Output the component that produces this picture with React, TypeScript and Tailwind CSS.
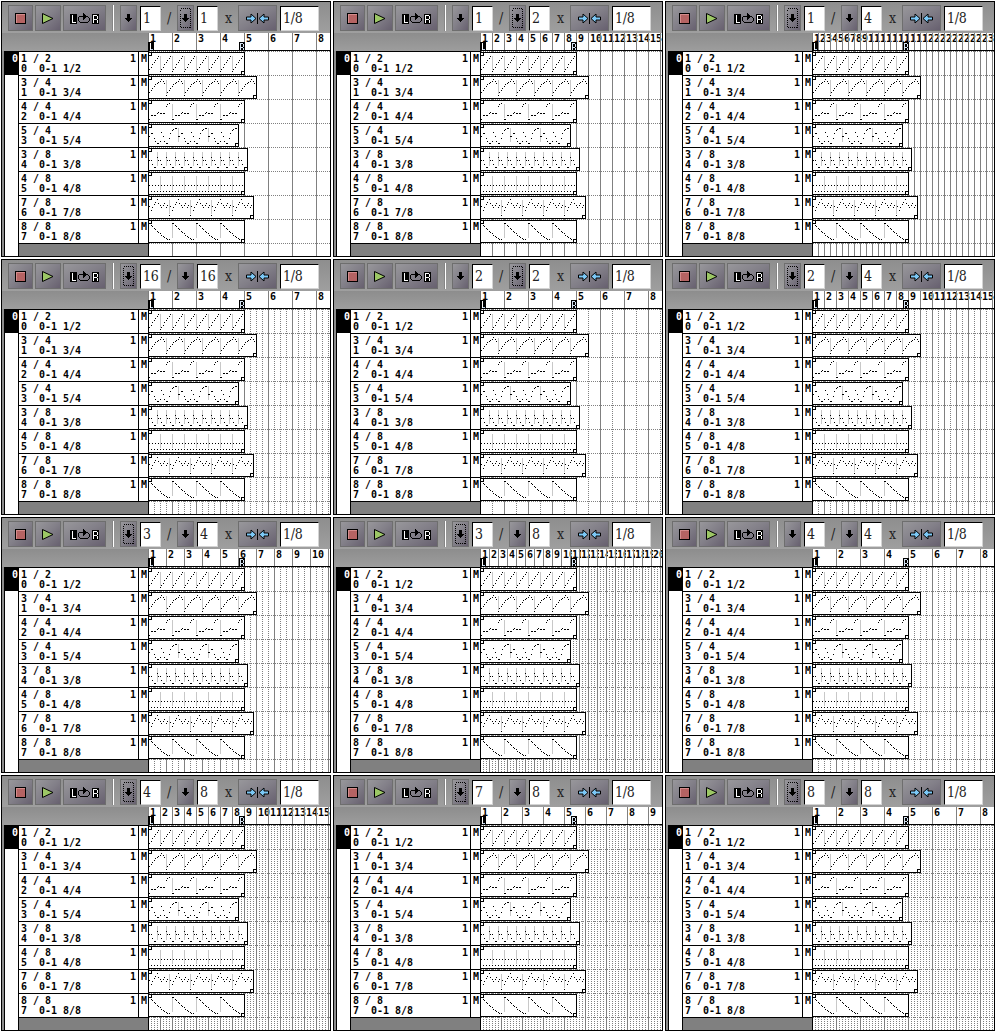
import React from "react";

type Focus = 0 | 1 | 2;
interface PanelSpec {
  beats: number;
  unit: number;
  beatPx: number;
  focus: Focus;
}

const PANELS: PanelSpec[] = [
  { beats: 1, unit: 1, beatPx: 24, focus: 2 },
  { beats: 1, unit: 2, beatPx: 12, focus: 2 },
  { beats: 1, unit: 4, beatPx: 6, focus: 1 },
  { beats: 16, unit: 16, beatPx: 6, focus: 1 },
  { beats: 2, unit: 2, beatPx: 12, focus: 2 },
  { beats: 2, unit: 4, beatPx: 6, focus: 1 },
  { beats: 3, unit: 4, beatPx: 6, focus: 1 },
  { beats: 3, unit: 8, beatPx: 3, focus: 1 },
  { beats: 4, unit: 4, beatPx: 6, focus: 0 },
  { beats: 4, unit: 8, beatPx: 3, focus: 1 },
  { beats: 7, unit: 8, beatPx: 3, focus: 1 },
  { beats: 8, unit: 8, beatPx: 3, focus: 1 },
];

interface Track {
  name: string;
  sig: string;
  period: number;
  length: number;
  notes: number[];
}

// A note value is its vertical offset inside the pattern box; -1 is a rest.
const TRACKS: Track[] = [
  { name: "1 / 2", sig: "1/2", period: 12, length: 96, notes: [19, 17, 15, 12, 10, 8, 6, 4] },
  { name: "3 / 4", sig: "3/4", period: 18, length: 108, notes: [19, 16, 14, 12, 10, 8, 7, 6, 5, 3, 5, 7] },
  { name: "4 / 4", sig: "4/4", period: 24, length: 96, notes: [19, 19, 15, 15, 15, 15, 13, 12, 13, 13, 13, 13, 6, 4, 3, -1] },
  { name: "5 / 4", sig: "5/4", period: 30, length: 90, notes: [12, 12, 9, 9, 14, 17, 19, 19, 17, 8, 12, 17, 19, 19, 14, 9, 6, 5, 4, 4] },
  { name: "3 / 8", sig: "3/8", period: 9, length: 99, notes: [9, 12, 12, 16, 19, 19] },
  { name: "4 / 8", sig: "4/8", period: 12, length: 96, notes: [19, 13, 19, 13, 19, 13, 19, 13] },
  { name: "7 / 8", sig: "7/8", period: 21, length: 105, notes: [19, 10, 14, 11, 8, 6, 3, 7, 9, 11, 9, 7, 11, 9] },
  { name: "8 / 8", sig: "8/8", period: 24, length: 96, notes: [3, 3, 5, 6, 8, 9, 11, 12, 13, 15, 16, 17, 18, 19, 19, -1] },
];

const GRID_W = 182;
const GRID_H = 205;

function Mono({ children, className = "" }: { children: React.ReactNode; className?: string }) {
  return (
    <span
      className={`block w-max origin-left scale-x-[.906] whitespace-pre font-['DejaVu_Sans_Mono',monospace] text-[11px] leading-[10px] font-bold ${className}`}
    >
      {children}
    </span>
  );
}

function ToolButton({ className, children }: { className: string; children: React.ReactNode }) {
  return (
    <button
      className={`flex h-[26px] shrink-0 items-center justify-center border border-[#6e6e6e] bg-linear-to-br from-[#98979b] via-[#827f88] to-[#67606f] ${className}`}
    >
      {children}
    </button>
  );
}

function DownButton({ focused, className }: { focused: boolean; className: string }) {
  return (
    <ToolButton className={`w-[17px] ${className}`}>
      <svg width="15" height="24" shapeRendering="crispEdges">
        {focused && <rect x="2.5" y="2.5" width="10" height="19" fill="none" stroke="#000" strokeDasharray="1 1" />}
        <path d="M6 8h3v4h2v1h-1v1h-1v1h-1v1h-1v-1h-1v-1h-1v-1h-1v-1h2z" fill="#000" />
      </svg>
    </ToolButton>
  );
}

function Entry({ value, className }: { value: string; className: string }) {
  return (
    <div
      className={`mt-px h-[25px] shrink-0 border border-t-black border-r-[#d4d4d4] border-b-[#d4d4d4] border-l-black bg-white pl-[2px] leading-[23px] text-[#222] ${className}`}
    >
      {value}
    </div>
  );
}

function LoopIcon() {
  return (
    <svg width="29" height="14" shapeRendering="crispEdges">
      <path d="M0 3h7v10h-7z" fill="#000" />
      <path d="M2 4h1v7h3v1h-4z" fill="#fff" />
      <path
        d="M9 5h4v1h-4zM8 6h1v1h-1zM8 7h1v3h-1zM9 10h1v1h-1zM10 11h8v1h-8zM18 10h1v1h-1zM19 7h1v3h-1zM18 6h1v1h-1zM17 5h1v1h-1z"
        fill="#000"
      />
      <path d="M13 2h1v1h1v1h1v1h1v1h-1v1h-1v1h-1v1h-1z" fill="#000" />
      <path d="M22 3h7v10h-7z" fill="#000" />
      <path d="M23 4h4v1h1v3h-1v1h1v3h-1v-3h-3v3h-1zM24 5v3h3v-3z" fill="#fff" fillRule="evenodd" />
    </svg>
  );
}

function Toolbar({ spec }: { spec: PanelSpec }) {
  return (
    <div className="flex h-[31px] items-start bg-linear-to-b from-[#8e8e8e] to-[#9f9f9f] pt-[3px] pl-[6px] font-['DejaVu_Serif_Condensed','DejaVu_Serif',serif] text-[14px] font-stretch-semi-condensed">
      <ToolButton className="w-[25px]">
        <svg width="11" height="11" shapeRendering="crispEdges">
          <rect width="11" height="11" fill="#000" />
          <rect x="1" y="1" width="9" height="9" fill="#d48c8c" />
          <rect x="2" y="2" width="8" height="8" fill="#b56363" />
        </svg>
      </ToolButton>
      <ToolButton className="ml-[2px] w-[26px]">
        <svg width="12" height="11">
          <path d="M.5.5L11 5.5L.5 10.5z" fill="#9cc765" stroke="#000" />
        </svg>
      </ToolButton>
      <ToolButton className="ml-[2px] w-[43px]">
        <LoopIcon />
      </ToolButton>
      <div className="ml-[6px] h-[26px] w-[2px] shrink-0 border-l border-l-[#858585] bg-white" />
      <DownButton focused={spec.focus === 1} className="ml-[6px]" />
      <Entry value={String(spec.beats)} className="ml-[3px] w-[21px] tracking-[-.2px]" />
      <span className="w-[16px] shrink-0 text-center leading-[26px] text-[#222]">/</span>
      <DownButton focused={spec.focus === 2} className="" />
      <Entry value={String(spec.unit)} className="ml-[3px] w-[21px] tracking-[-.2px]" />
      <span className="w-[20px] shrink-0 pl-px text-center leading-[26px] text-[#222]">x</span>
      <ToolButton className="w-[39px]">
        <svg width="23" height="11">
          <g fill="#7cc8f6" stroke="#000">
            <path d="M.5 4v3h4.5v3l5-4.5l-5-4.500v3z" />
            <path d="M22.500 4v3h-4.500v3l-5-4.500l5-4.500v3z" />
          </g>
          <path d="M11 0h1v11h-1z" fill="#000" />
        </svg>
      </ToolButton>
      <Entry value="1/8" className="ml-[3px] w-[39px] tracking-[-.2px]" />
    </div>
  );
}

function Ruler({ measure }: { measure: number }) {
  const cells = Array.from({ length: Math.ceil(GRID_W / measure) }, (_, i) => i + 1);
  return (
    <div className="relative h-[18px] w-[182px] overflow-hidden border-b border-black bg-white">
      <div className="flex h-[17px]">
        {cells.map((n) => (
          <div
            key={n}
            className="relative z-0 h-[17px] shrink-0 border-l border-[#808080] pt-px pl-px"
            style={{ width: measure }}
          >
            <Mono className="bg-white text-black">{n}</Mono>
          </div>
        ))}
      </div>
      <div className="absolute top-[9px] left-0 z-10 h-[9px] w-[6px] bg-black">
        <svg width="6" height="9" shapeRendering="crispEdges">
          <path d="M2 1h1v7h-1z" fill="#fff" />
          <path d="M3 7h2v1h-2z" fill="#b9d0ea" />
        </svg>
      </div>
      <div className="absolute top-[9px] left-[91px] z-10 h-[9px] w-[6px] bg-black">
        <svg width="6" height="9" shapeRendering="crispEdges">
          <path d="M1 1h3v1h1v3h-1v1h1v3h-1v-3h-2v3h-1zM2 2v3h2v-3z" fill="#d5e3f2" fillRule="evenodd" />
        </svg>
      </div>
    </div>
  );
}

function Pattern({ track, top }: { track: Track; top: number }) {
  const { period, length, notes } = track;
  const marks: number[] = [];
  for (let x = period; x < length; x += period) marks.push(x);
  let d = "";
  for (let start = 0; start < length; start += period) {
    notes.forEach((y, i) => {
      const x = Math.floor(start + i * 1.5);
      if (y >= 0 && x < length) d += `M${x} ${top + y}h1v1h-1z`;
    });
  }
  return (
    <g>
      <rect x="0.5" y={top + 0.5} width={length} height="22" fill="#fff" stroke="#000" />
      {marks.map((x) => (
        <rect key={x} x={x} y={top + 4} width="1" height="14" fill="#c8c8c8" />
      ))}
      <path d={d} fill="#000" />
      <rect x="0.5" y={top + 0.5} width="3" height="3" fill="#fff" stroke="#000" />
      <rect x={length - 2.5} y={top + 19.5} width="3" height="3" fill="#fff" stroke="#000" />
    </g>
  );
}

function Roll({ spec }: { spec: PanelSpec }) {
  const measure = (24 * spec.beats) / spec.unit;
  const lines: React.ReactNode[] = [];
  for (let x = 0; x < GRID_W; x += spec.beatPx) {
    lines.push(
      <path
        key={x}
        d={`M${x + 0.5} 0V${GRID_H}`}
        stroke="#808080"
        strokeDasharray={x % measure === 0 ? undefined : "1 1"}
      />
    );
  }
  return (
    <svg width={GRID_W} height={GRID_H} className="block bg-white" shapeRendering="crispEdges">
      {Array.from({ length: 9 }, (_, i) => (
        <path key={i} d={`M1 ${i * 24 + 0.5}H${GRID_W}`} stroke="#808080" strokeDasharray="1 1" />
      ))}
      {lines}
      <path d={`M.5 0V${GRID_H}`} stroke="#000" />
      {TRACKS.map((t, i) => (
        <Pattern key={t.name} track={t} top={1 + i * 24} />
      ))}
    </svg>
  );
}

function TrackList() {
  return (
    <div className="flex h-[205px] bg-[#8c8c8c] pl-[2px]">
      <div className="w-[14px] border-t border-l border-black bg-white">
        <div className="flex h-[23px] w-[13px] justify-end bg-black pt-[2px]">
          <div className="w-[6px]">
            <Mono className="text-white">0</Mono>
          </div>
        </div>
      </div>
      <div className="flex w-[130px] flex-col border-l border-black bg-[#808080]">
        {TRACKS.map((t, i) => (
          <div key={t.name} className="flex h-[24px] border-t border-black bg-white text-black">
            <div className="w-[111px] pt-[2px] pl-[2px]">
              <Mono>{t.name}</Mono>
              <Mono>{`${i}  0-1 ${t.sig}`}</Mono>
            </div>
            <div className="w-[8px] pt-[2px]">
              <Mono>1</Mono>
            </div>
            <div className="w-[10px] border-l border-black pt-[2px] pl-[2px]">
              <Mono>M</Mono>
            </div>
          </div>
        ))}
        <div className="h-px bg-black" />
      </div>
    </div>
  );
}

function SongPanel({ spec }: { spec: PanelSpec }) {
  return (
    <section className="h-[256px] w-[330px] overflow-hidden border border-black">
      <Toolbar spec={spec} />
      <div className="flex">
        <div className="w-[146px]">
          <div className="h-[18px] bg-linear-to-b from-[#8d8d8d] to-[#9d9d9d]" />
          <TrackList />
        </div>
        <div className="w-[182px]">
          <Ruler measure={(24 * spec.beats) / spec.unit} />
          <Roll spec={spec} />
        </div>
      </div>
    </section>
  );
}

export default function App() {
  return (
    <main className="grid h-[1032px] w-[996px] grid-cols-[330px_330px_330px] content-start gap-[2px] overflow-hidden bg-white pt-px pl-px">
      {PANELS.map((p) => (
        <SongPanel key={`${p.beats}/${p.unit}`} spec={p} />
      ))}
    </main>
  );
}
